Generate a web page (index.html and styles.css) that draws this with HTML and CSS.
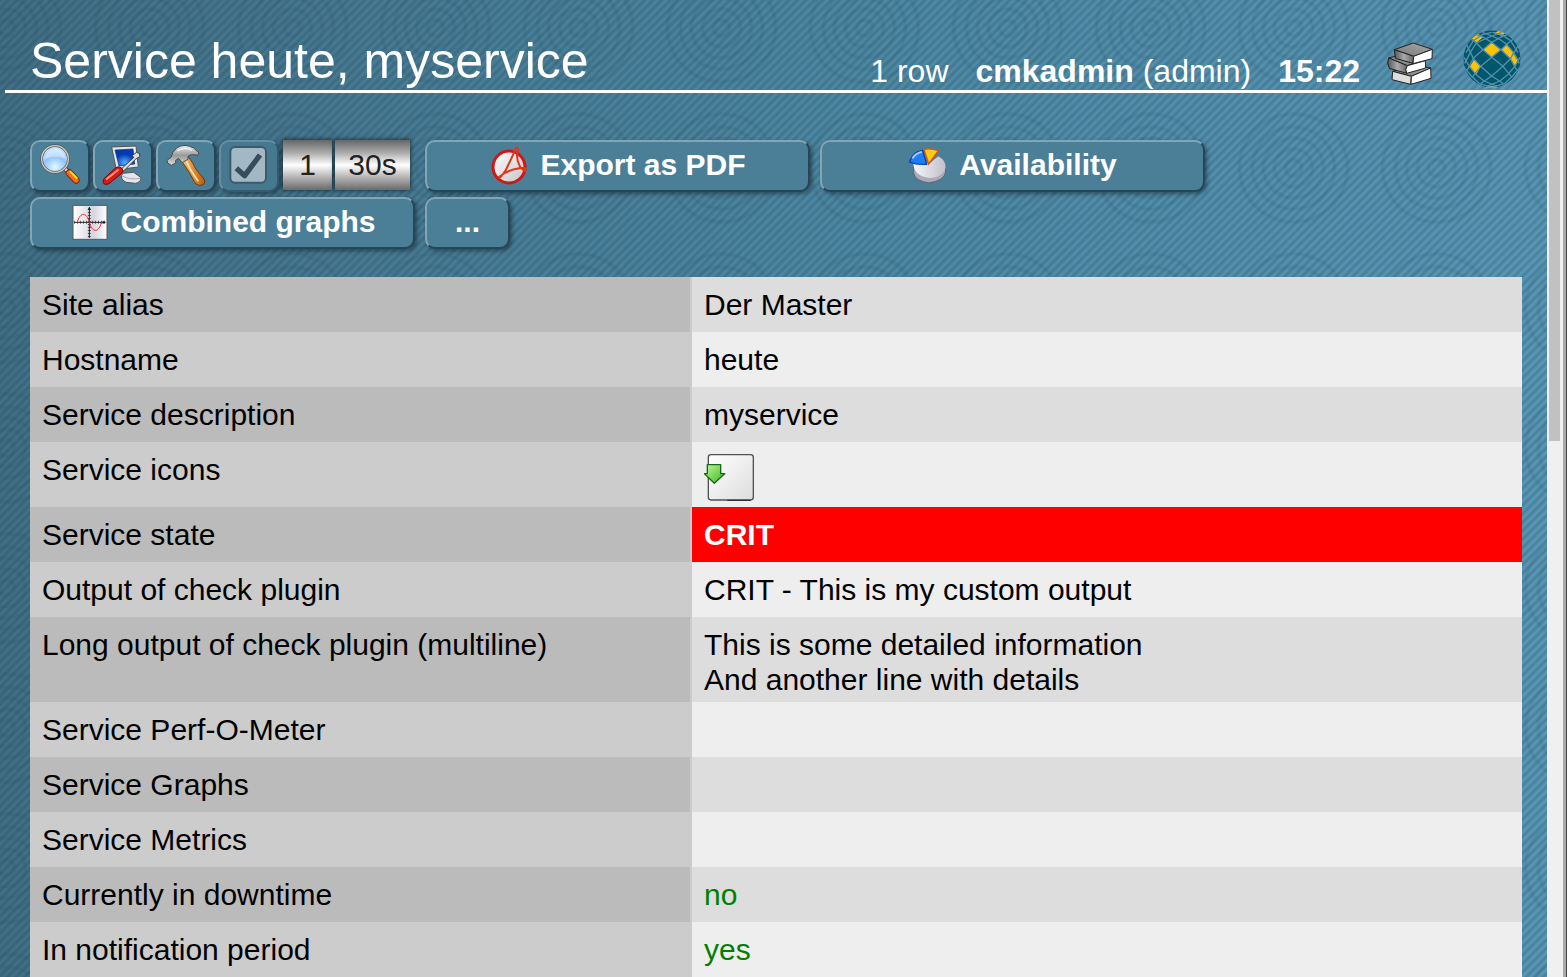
FILE: index.html
```
<!DOCTYPE html>
<html lang="en">
<head>
<meta charset="utf-8">
<title>Service heute, myservice</title>
<link rel="stylesheet" href="styles.css">
</head>
<body>
<div class="page">
  <header class="header">
    <h1 class="title"><a href="#">Service heute, myservice</a></h1>
    <div class="status">
      <span class="rows">1 row</span>
      <span class="user"><b>cmkadmin</b> (admin)</span>
      <b class="clock">15:22</b>
    </div>
    <a class="manual" href="#" aria-label="Documentation">
      <svg width="48" height="46" viewBox="52 124 144 138">
        <defs><linearGradient id="cover" x1="0" x2="1" y1="1" y2="0"><stop offset="0" stop-color="#777"/><stop offset="1" stop-color="#aaa"/></linearGradient>
        <linearGradient id="spine"><stop offset="0" stop-color="#555"/><stop offset=".5" stop-color="#aaa"/><stop offset="1" stop-color="#666"/></linearGradient></defs>
        <g stroke="#222" stroke-width="3" stroke-linejoin="round">
          <path d="M72 215 L130 196 L186 205 L128 230Z" fill="url(#cover)"/>
          <path d="M72 215 L128 230 L126 254 L70 240Z" fill="#ddd"/>
          <path d="M128 230 L186 205 L187 236 L127 254Z" fill="#fff"/>
          <path d="M60 175 L115 160 L168 180 L116 198Z" fill="url(#cover)"/>
          <path d="M60 175 L116 198 Q108 208 114 221 L62 206 Q53 188 60 175Z" fill="url(#spine)"/>
          <path d="M116 198 L170 183 L171 205 L114 221 Q108 208 116 198Z" fill="#fff"/>
          <path d="M77 150 L134 130 L191 149 L135 170Z" fill="url(#cover)"/>
          <path d="M77 150 L135 170 L133 191 L80 176Z" fill="url(#spine)"/>
          <path d="M135 170 L191 149 L190 177 L133 192Z" fill="#fff"/>
        </g>
      </svg>
    </a>
    <a class="logo" href="#" aria-label="Home">
      <svg width="58" height="58" viewBox="287 90 174 174">
        <defs><clipPath id="ball"><circle cx="374" cy="177" r="86"/></clipPath></defs>
        <g clip-path="url(#ball)">
          <circle cx="374" cy="177" r="86" fill="#02566b"/>
          <g fill="#fdc300">
            <path d="M373 127 L399 149 L373 172 L347 149Z"/>
            <path d="M417 132 L438 157 L429 176 L403 149Z"/>
            <path d="M320 179 L341 199 L326 224 L307 201Z"/>
            <path d="M430 176 L440 158 L453 180 L443 198Z"/>
            <path d="M330 100 L347 112 L328 127 L311 114Z"/>
            <path d="M398 91 L415 99 L402 107 L380 99Z"/>
            <path d="M373 257 L394 262 L373 268 L352 262Z"/>
          </g>
          <g fill="none" stroke="#5590ad" stroke-width="4" stroke-linejoin="round">
            <path d="M375 97 L403 104 L430 122 L452 158"/>
            <path d="M345 97 L374 108 L399 119 L417 132 L438 157 L456 190"/>
            <path d="M320 101 L347 111 L373 127 L401 149 L429 176 L448 210"/>
            <path d="M305 113 L327 129 L347 149 L373 172 L407 199 L434 232"/>
            <path d="M297 132 L318 175 L340 199 L373 228 L410 252"/>
            <path d="M290 172 L307 201 L327 224 L350 243 L390 259"/>
            <path d="M292 204 L312 228 L335 250 L373 262"/>
            <path d="M373 97 L345 104 L318 122 L296 158"/>
            <path d="M403 97 L374 108 L348 119 L327 129 L309 157 L292 190"/>
            <path d="M428 101 L401 111 L373 127 L347 149 L318 175 L300 210"/>
            <path d="M443 113 L420 131 L401 149 L373 172 L340 199 L314 232"/>
            <path d="M453 136 L429 176 L407 199 L373 228 L338 252"/>
            <path d="M458 172 L441 201 L421 224 L398 243 L358 259"/>
            <path d="M456 204 L436 228 L413 250 L373 262"/>
          </g>
        </g>
      </svg>
    </a>
  </header>

  <nav class="toolbar">
    <div class="tools">
      <button class="btn icon" aria-label="Search">
        <svg width="44" height="44" viewBox="0 0 132 132">
          <defs><radialGradient id="lens" cx=".5" cy=".8" r=".8"><stop offset="0" stop-color="#e4fbff"/><stop offset=".5" stop-color="#8fc4ff"/><stop offset="1" stop-color="#d8ecff"/></radialGradient></defs>
          <path d="M82 78 L97 93" stroke="#444" stroke-width="14"/><path d="M82 78 L97 93" stroke="#ddd" stroke-width="8"/>
          <path d="M94 90 L114 111" stroke="#8b2500" stroke-width="22" stroke-linecap="round"/>
          <path d="M94 90 L114 111" stroke="#f76b1c" stroke-width="16" stroke-linecap="round"/>
          <path d="M97 86 L116 105" stroke="#ffdb28" stroke-width="6" stroke-linecap="round"/>
          <circle cx="51" cy="48" r="40" fill="url(#lens)" stroke="#555" stroke-width="8"/>
          <circle cx="51" cy="48" r="40" fill="none" stroke="#d4d0c8" stroke-width="4"/>
          <path d="M20 48 Q28 17 56 18 Q78 22 82 46 Q50 35 20 48Z" fill="#fff" opacity=".4"/>
        </svg>
      </button>
      <button class="btn icon" aria-label="Display options">
        <svg width="44" height="44" viewBox="0 0 132 132">
          <defs><radialGradient id="screen" cy=".8"><stop offset="0" stop-color="#59a8ff"/><stop offset="1" stop-color="#003bb1"/></radialGradient></defs>
          <path d="M65 91 L98 88 L120 104 Q120 118 103 121 L75 118 Q54 107 65 91Z" fill="#e5e5f2" stroke="#555" stroke-width="3"/>
          <path d="M62 98 Q88 112 117 106" fill="none" stroke="#aaa" stroke-width="3"/>
          <path d="M32 12 L105 9 L112 72 L46 80Z" fill="#e7e6ee" stroke="#555" stroke-width="3"/>
          <path d="M42 21 L96 18 L101 63 L54 69Z" fill="url(#screen)" stroke="#002f87" stroke-width="2"/>
          <path d="M56 82 L98 44 L94 37 L107 28 L116 32 L116 41 L103 49 L64 88Z" fill="#ddd" stroke="#444" stroke-width="3"/>
          <path d="M7 109 L43 75 Q52 67 62 75 Q70 83 62 91 L24 122 Q3 130 7 109Z" fill="#d51a17" stroke="#760909" stroke-width="3"/>
          <path d="M17 108 L51 81" stroke="#ff9186" stroke-width="6" stroke-linecap="round"/>
        </svg>
      </button>
      <button class="btn icon" aria-label="Commands">
        <svg width="44" height="44" viewBox="0 0 132 132">
          <defs><linearGradient id="steel" x2="0" y2="1"><stop offset="0" stop-color="#eee"/><stop offset=".5" stop-color="#999"/><stop offset="1" stop-color="#ddd"/></linearGradient>
          <linearGradient id="wood"><stop offset="0" stop-color="#ffc778"/><stop offset="1" stop-color="#bd5a08"/></linearGradient></defs>
          <path d="M52 53 L72 40 L88 63 Q93 79 118 105 Q128 116 116 126 Q104 131 93 120 Q75 83 52 53Z" fill="url(#wood)" stroke="#703708" stroke-width="3"/>
          <path d="M67 53 Q78 82 103 115" stroke="#ffe0a5" stroke-width="5" fill="none"/>
          <path d="M11 60 L9 52 L21 43 Q24 27 39 14 Q62 0 89 15 L105 30 L101 37 Q82 32 72 40 L72 49 L54 59 L44 46 L35 52 L35 60 L22 67Z" fill="url(#steel)" stroke="#4c4c4c" stroke-width="3" stroke-linejoin="round"/>
          <path d="M40 24 Q60 9 84 22" stroke="#fff" stroke-width="4" fill="none" opacity=".7"/>
        </svg>
      </button>
      <button class="btn icon dim" aria-label="Select rows">
        <svg width="44" height="44" viewBox="0 0 132 132">
          <rect x="10" y="12" width="107" height="107" rx="14" fill="#a3b8c5" stroke="#3c5a6c" stroke-width="6"/>
          <path d="M28 76 L53 98 L99 36" fill="none" stroke="#364d5c" stroke-width="16" stroke-linejoin="round"/>
        </svg>
      </button>
      <button class="switch columns">1</button>
      <button class="switch refresh">30s</button>
    </div>
    <button class="btn wide">
      <svg width="40" height="40" viewBox="0 0 120 120">
        <defs><linearGradient id="disc" x2="1" y2="1"><stop offset="0" stop-color="#fff"/><stop offset="1" stop-color="#c4c4c4"/></linearGradient></defs>
        <circle cx="60" cy="66" r="48" fill="url(#disc)" stroke="#d01717" stroke-width="9"/>
        <path d="M79 12 Q84 3 88 13 Q78 35 93 65 Q106 81 110 75 Q112 66 91 70 Q50 77 30 96 Q32 104 50 76 Q75 25 79 12Z" fill="none" stroke="#e6331b" stroke-width="6" stroke-linejoin="round"/>
      </svg>
      <span>Export as PDF</span>
    </button>
    <button class="btn wide">
      <svg width="40" height="40" viewBox="0 0 120 120">
        <defs><linearGradient id="pie"><stop offset="0" stop-color="#f6f6fa"/><stop offset="1" stop-color="#c0bfca"/></linearGradient></defs>
        <path d="M17 58 L17 85 Q21 108 63 114 Q109 107 113 81 L113 60Z" fill="#aaaab8" stroke="#62626f" stroke-width="3"/>
        <path d="M16 58 Q18 43 35 38 L62 57 L91 34 Q114 47 113 67 Q106 98 64 99 Q20 94 16 58Z" fill="url(#pie)"/>
        <path d="M5 51 Q13 20 44 16 L56 58 Q24 60 5 51Z" fill="#207cfa" stroke="#0842a8" stroke-width="4"/>
        <path d="M13 40 Q25 23 42 21" fill="none" stroke="#9dcfff" stroke-width="6"/>
        <path d="M48 13 Q70 9 91 17 L62 57Z" fill="#ffcb16" stroke="#e74f0c" stroke-width="4"/>
      </svg>
      <span>Availability</span>
    </button>
    <button class="btn wide">
      <svg width="40" height="40" viewBox="0 0 120 120">
        <defs><linearGradient id="plot"><stop offset="0" stop-color="#fff"/><stop offset=".6" stop-color="#d5d5e2"/><stop offset="1" stop-color="#fff"/></linearGradient></defs>
        <rect x="12" y="10" width="102" height="102" fill="url(#plot)" stroke="#555" stroke-width="3"/>
        <path d="M15 61H109M61 16V108" stroke="#222" stroke-width="3"/>
        <path d="M15 61H109M61 22V108" stroke="#222" stroke-width="9" stroke-dasharray="2 7"/>
        <path d="M56 23L61 14L66 23ZM101 56L111 61L101 66Z" fill="#222"/>
        <path d="M25 61C33 29 53 29 61 61S90 93 97 61" fill="none" stroke="#f22" stroke-width="3"/>
      </svg>
      <span>Combined graphs</span>
    </button>
    <button class="btn more">...</button>
  </nav>

  <table class="details">
    <tbody>
      <tr><th scope="row">Site alias</th><td>Der Master</td></tr>
      <tr><th scope="row">Hostname</th><td>heute</td></tr>
      <tr><th scope="row">Service description</th><td>myservice</td></tr>
      <tr><th scope="row">Service icons</th><td>
        <a class="passive" href="#" aria-label="Passive check">
          <svg width="50" height="50" viewBox="0 0 150 150">
            <defs><linearGradient id="sheet" x2="1" y2="1"><stop offset="0" stop-color="#fff"/><stop offset="1" stop-color="#ddd"/></linearGradient>
            <linearGradient id="arrow" x2="1" y2="1"><stop offset="0" stop-color="#c8f79a"/><stop offset="1" stop-color="#36b51a"/></linearGradient></defs>
            <rect x="13" y="8" width="135" height="136" rx="8" fill="url(#sheet)" stroke="#505055" stroke-width="4"/>
            <path d="M70 145H140" stroke="#222" stroke-width="3"/>
            <path d="M10 38H50V65H62L31 94L1 65H10Z" fill="url(#arrow)" stroke="#12691f" stroke-width="4" stroke-linejoin="round"/>
          </svg>
        </a>
      </td></tr>
      <tr><th scope="row">Service state</th><td class="crit">CRIT</td></tr>
      <tr><th scope="row">Output of check plugin</th><td>CRIT - This is my custom output</td></tr>
      <tr><th scope="row">Long output of check plugin (multiline)</th><td>This is some detailed information<br>And another line with details</td></tr>
      <tr><th scope="row">Service Perf-O-Meter</th><td></td></tr>
      <tr><th scope="row">Service Graphs</th><td></td></tr>
      <tr><th scope="row">Service Metrics</th><td></td></tr>
      <tr><th scope="row">Currently in downtime</th><td class="ok">no</td></tr>
      <tr><th scope="row">In notification period</th><td class="ok">yes</td></tr>
    </tbody>
  </table>
</div>
<div class="scrollbar"><div class="thumb"></div></div>
</body>
</html>
```

FILE: styles.css
```
* { box-sizing: border-box; }

body {
  margin: 0;
  height: 100vh;
  overflow: hidden;
  display: flex;
  font-family: "Liberation Sans", Arial, sans-serif;
  font-size: 30px;
  line-height: 35px;
  color: #000;
  background:
    radial-gradient(circle at center,
      transparent 5px, rgba(30, 60, 80, .12) 8px, transparent 11px,
      transparent 16px, rgba(30, 60, 80, .12) 19px, transparent 22px,
      transparent 27px, rgba(30, 60, 80, .12) 30px, transparent 33px,
      transparent 38px, rgba(30, 60, 80, .12) 41px, transparent 44px,
      transparent 51px, rgba(30, 60, 80, .12) 54px, transparent 57px) -65px -42px / 143px 140px,
    repeating-linear-gradient(135deg, rgba(20, 60, 80, .28) 0, rgba(20, 60, 80, 0) 3px, rgba(20, 60, 80, .28) 6px),
    linear-gradient(90deg, #447187 0%, #4a7d96 25%, #508ba6 55%, #5c9ab9 100%);
}

a { color: inherit; text-decoration: none; }
svg { display: block; flex: none; }

.page { flex: 1; min-width: 0; padding-left: 5px; }

.header {
  display: flex;
  align-items: flex-end;
  height: 93px;
  padding: 0 26px 0 25px;
  border-bottom: 3px solid #fff;
  color: #fff;
  white-space: nowrap;
}
.title { flex: 1; margin: 0; font-size: 50px; line-height: 58px; font-weight: 400; }
.status { display: flex; gap: 27px; font-size: 32px; line-height: 38px; }
.manual { margin: 0 0 3px 26px; }
.logo { margin: 0 0 2px 29px; }

.toolbar {
  display: flex;
  flex-wrap: wrap;
  gap: 5px 10px;
  padding: 47px 25px 28px;
}
.tools { display: flex; gap: 3px; width: 385px; }

.btn {
  display: flex;
  align-items: center;
  justify-content: center;
  gap: 11px;
  height: 52px;
  padding: 0 0 3px;
  border: 2px solid;
  border-color: #83a6b6 #25465a #25465a #83a6b6;
  border-radius: 10px;
  background: #4b7f97;
  box-shadow: 2px 2px 4px rgba(0, 0, 0, .4);
  color: #fff;
  font: bold 30px/35px "Liberation Sans", Arial, sans-serif;
}
.icon { width: 60px; }
.dim { border-color: #668ea2 #365b70 #365b70 #668ea2; background: #46788f; }
.wide { width: 385px; }
.more { width: 85px; }

.switch {
  height: 50px;
  padding: 0 0 2px;
  border: 0;
  background: linear-gradient(#666, #aaa 25%, #fff 50%, #aaa 78%, #6a6a6a);
  box-shadow: 0 0 4px 1px rgba(0, 0, 0, .5);
  color: #222;
  font: 30px/35px "Liberation Sans", Arial, sans-serif;
}
.columns { width: 49px; margin-left: 1px; }
.refresh { width: 75px; }

.details { width: calc(100% - 50px); margin: 0 25px; border-collapse: collapse; table-layout: fixed; }
.details th, .details td { height: 55px; padding: 10px 12px 5px; vertical-align: top; text-align: left; }
.details th { width: 660px; background: #ccc; font-weight: 400; }
.details td { padding-left: 14px; background: #eee; box-shadow: inset 2px 0 #ccc; }
.details tr:nth-child(odd) th { background: #bbb; }
.details tr:nth-child(odd) td { background: #ddd; }
.details tr .crit.crit { background: #f00; color: #fff; font-weight: 700; }
.details .ok { color: #008000; }
.passive { display: block; width: 50px; }

.scrollbar { width: 20px; padding: 0 2px; background: #f0f0f0; border-right: 1px solid #444; box-shadow: inset -3px 0 #aaa; }
.thumb { width: 11px; height: 45.1vh; background: #c1c1c1; }
```
